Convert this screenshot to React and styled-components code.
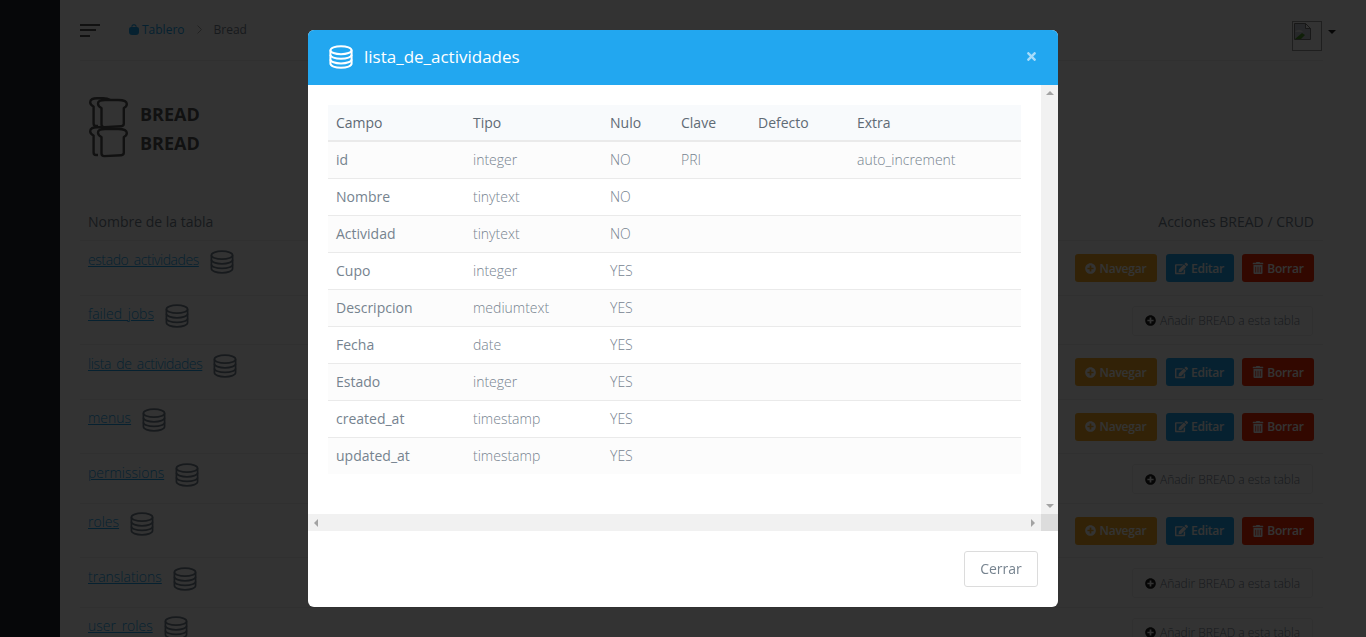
import React from "react";
import styled, { createGlobalStyle } from "styled-components";
import { FaPlusCircle, FaEdit, FaTrashAlt, FaTimes } from "react-icons/fa";

const GlobalStyle = createGlobalStyle`
  html, body {
    margin: 0;
    height: 100%;
    overflow: hidden;
    background: #fff;
    font-family: "Open Sans", "Liberation Sans", sans-serif;
    font-size: 14px;
    color: #76838f;
  }
  * { box-sizing: border-box; }
`;

const Page = styled.div`
  display: flex;
  height: 637px;
  overflow: hidden;
`;

const Sidebar = styled.aside`
  width: 60px;
  flex: none;
  background: #22262e;
`;

const Main = styled.main`
  flex: 1;
  padding: 0 43px 0 20px;
`;

const Navbar = styled.header`
  height: 61px;
  display: flex;
  align-items: center;
  border-bottom: 1px solid #eee;
`;

const Burger = styled.div`
  display: flex;
  flex-direction: column;
  gap: 3.5px;
  width: 20px;
  margin-right: 29px;
  span {
    display: block;
    height: 2px;
    background: #555;
  }
  span:nth-child(2) { width: 16px; }
  span:nth-child(3) { width: 10px; }
`;

const Crumbs = styled.nav`
  display: flex;
  align-items: center;
  font-size: 12px;
  color: #76838f;
  margin-top: -1px;
  a {
    display: flex;
    align-items: center;
    gap: 3px;
    color: #22a7f0;
  }
  svg.sep { margin: 0 12px; }
`;

const Profile = styled.div`
  align-self: flex-start;
  margin-left: auto;
  margin-right: -13px;
  padding-top: 21px;
  display: flex;
  align-items: flex-start;
  gap: 6px;
`;

const Avatar = styled.div`
  width: 30px;
  height: 30px;
  border: 1px solid #999;
  padding: 1px 0 0 1px;
`;

const Caret = styled.i`
  width: 0;
  height: 0;
  margin-top: 9px;
  border-left: 4px solid transparent;
  border-right: 4px solid transparent;
  border-top: 4px solid #222;
`;

const Heading = styled.div`
  display: flex;
  flex-direction: column;
  margin: 38px 0 0 9px;
`;

const HeadingLine = styled.div`
  display: flex;
  align-items: center;
  gap: 12px;
  height: 29px;
  font-size: 18px;
  font-weight: 700;
  color: #555;
  svg { margin-top: -2px; }
`;

const Table = styled.div`
  margin-top: 47px;
`;

const HeadRow = styled.div`
  display: flex;
  justify-content: space-between;
  align-items: flex-end;
  height: 37px;
  padding: 0 9px 9px 8px;
  border-bottom: 1px solid #eee;
  color: #76838f;
`;

const Row = styled.div`
  display: flex;
  justify-content: space-between;
  align-items: flex-start;
  height: ${(p) => (p.$bread ? 54.5 : 49.5)}px;
  padding: ${(p) => (p.$bread ? "13px 8px 0" : "10px 10px 0 8px")};
  border-bottom: 1px solid #eee;
`;

const TableName = styled.div`
  display: flex;
  align-items: flex-start;
  gap: 11px;
  margin-top: ${(p) => (p.$bread ? -5.5 : -2.5)}px;
  a {
    color: #22a7f0;
    font-weight: 300;
    letter-spacing: ${(p) => p.$track || 0}px;
    text-decoration: underline;
    line-height: 22px;
  }
  svg { margin-top: 1px; }
`;

const Actions = styled.div`
  display: flex;
  gap: 8.5px;
  margin-right: 1px;
`;

const ActionButton = styled.button`
  display: flex;
  align-items: center;
  justify-content: center;
  gap: 3px;
  height: 28px;
  width: ${(p) => p.$w}px;
  padding: 0;
  border: 0;
  border-radius: 3px;
  font: 600 12px "Open Sans", sans-serif;
  letter-spacing: -0.2px;
  color: #fff;
  background: ${(p) => p.$bg};
`;

const AddButton = styled.button`
  display: flex;
  align-items: center;
  justify-content: center;
  gap: 4px;
  width: 181px;
  height: 30px;
  padding: 0;
  background: #fff;
  border: 1px solid #eee;
  border-radius: 3px;
  font: 300 12px "Open Sans", sans-serif;
  color: #76838f;
  svg { color: #222; font-size: 11px; }
`;

const Backdrop = styled.div`
  position: fixed;
  inset: 0;
  background: rgba(0, 0, 0, 0.8);
  display: flex;
  justify-content: center;
  align-items: flex-start;
  padding-top: 30px;
`;

const Modal = styled.section`
  width: 750px;
  height: 577px;
  background: #fff;
  border-radius: 6px;
  overflow: hidden;
  display: flex;
  flex-direction: column;
`;

const ModalHeader = styled.div`
  height: 55px;
  flex: none;
  display: flex;
  align-items: center;
  gap: 11px;
  padding: 0 20px 2px 21px;
  background: #22a7f0;
  color: #fff;
  font-size: 17px;
`;

const Close = styled.span`
  margin-left: auto;
  display: flex;
  color: #a7dcfa;
`;

const ModalBody = styled.div`
  height: 446px;
  flex: none;
  display: grid;
  grid-template-columns: 733px 17px;
  grid-template-rows: 429px 17px;
`;

const Content = styled.div`
  padding: 20px;
  overflow: hidden;
`;

const ColumnsTable = styled.table`
  width: 693px;
  border-collapse: collapse;
  table-layout: fixed;
  th, td {
    height: 37px;
    padding: 0 8px;
    font-size: 14px;
    font-weight: 400;
    text-align: left;
    border-bottom: 1px solid #eaeaea;
  }
  th {
    height: 36px;
    color: #5f6a75;
    background: #f8fafc;
    border-bottom-width: 2px;
  }
  td { color: #76838f; font-weight: 300; }
  td:first-child { font-weight: 400; }
  tbody tr:nth-child(odd) { background: #fcfcfc; }
  tbody tr:last-child td { border-bottom: 0; }
`;

const Track = styled.div`
  display: flex;
  flex-direction: ${(p) => (p.$vertical ? "column" : "row")};
  justify-content: space-between;
  align-items: center;
  padding: ${(p) => (p.$vertical ? "6px 0" : "0 6px")};
  background: #f1f1f1;
`;

const Corner = styled.div`
  background: #dcdcdc;
`;

const Arrow = styled.i`
  width: 0;
  height: 0;
  ${(p) =>
    ({
      up: "border-left: 4px solid transparent; border-right: 4px solid transparent; border-bottom: 4px solid #a3a3a3;",
      down: "border-left: 4px solid transparent; border-right: 4px solid transparent; border-top: 4px solid #a3a3a3;",
      left: "border-top: 4px solid transparent; border-bottom: 4px solid transparent; border-right: 4px solid #a3a3a3;",
      right: "border-top: 4px solid transparent; border-bottom: 4px solid transparent; border-left: 4px solid #a3a3a3;",
    })[p.$dir]}
`;

const ModalFooter = styled.div`
  flex: 1;
  display: flex;
  justify-content: flex-end;
  padding: 20px;
`;

const CloseButton = styled.button`
  width: 74px;
  height: 36px;
  padding: 0 0 2px;
  background: #fff;
  border: 1px solid #dcdcdc;
  border-radius: 3px;
  font: 400 14px "Open Sans", sans-serif;
  color: #76838f;
`;

const DbIcon = ({ size = 24, color = "#76838f", width = 1.7 }) => (
  <svg width={size} height={size} viewBox="0 0 24 24" fill="none" stroke={color} strokeWidth={width}>
    <ellipse cx="12" cy="5.2" rx="10.6" ry="4" />
    <path d="M1.4 5.2v13.4c0 2.400 4.700 4.200 10.600 4.200s10.600-1.800 10.600-4.200V5.200" />
    <path d="M1.4 9.800c0 2.200 4.700 4 10.600 4s10.600-1.800 10.600-4" />
    <path d="M1.4 14.400c0 2.200 4.700 4 10.600 4s10.600-1.800 10.600-4" />
  </svg>
);

const BreadIcon = () => (
  <svg width="39" height="32" viewBox="0 0 39 32" fill="none" stroke="#555" strokeWidth="2.4" strokeLinejoin="round">
    <path d="M9 29H7c-1.500 0-2.400-1-2.400-2.600V9.500C2.600 8.600 1.200 7.200 1.200 5.200 1.200 2.400 4 1.200 8 1.200h6c3 0 5.400.6 7 1.800" />
    <path d="M12.500 27.500V11C10 10 9 8.300 9 6.500 9 4 12 3 16 3h13c5 0 8.800 1.300 8.800 4 0 1.800-1.300 3.200-3 4v15.800c0 1.500-1 2.300-2.500 2.400l-17 .9c-1.700 0-2.800-1-2.800-2.600z" />
  </svg>
);

const BoatIcon = () => (
  <svg width="10" height="11" viewBox="0 0 10 11" fill="#22a7f0">
    <path d="M2.500 3.500V2c0-2.400 5-2.400 5 0v1.500H6.600V2.200c0-1-3.200-1-3.200 0v1.300z" />
    <path d="M0 5c0-1.300 1-2 2-2h6c1 0 2 .7 2 2v3c0 2-1 3-3 3H3c-2 0-3-1-3-3z" />
  </svg>
);

const Chevron = () => (
  <svg className="sep" width="5" height="9" viewBox="0 0 5 9" fill="none" stroke="#aaa" strokeWidth="1">
    <path d="M.5.500l4 4-4 4" />
  </svg>
);

const BrokenImage = () => (
  <svg width="17" height="17" viewBox="0 0 17 17">
    <path d="M.5.500h11l5 5v11H.500z" fill="#c0c6d2" stroke="#777" />
    <path d="M11.500.500v5h5z" fill="#fff" stroke="#777" />
    <path d="M1 16l7-6 3 2-4 4z" fill="#4c9a2a" />
    <path d="M1 9c2-3 6-3 8 0z" fill="#e8e8e8" />
  </svg>
);

const tables = [
  ["estado_actividades", true, -0.42],
  ["failed_jobs", false],
  ["lista_de_actividades", true, -0.4],
  ["menus", true],
  ["permissions", false],
  ["roles", true],
  ["translations", false],
  ["user_roles", false],
];

const columns = [
  ["id", "integer", "NO", "PRI", "", "auto_increment"],
  ["Nombre", "tinytext", "NO", "", "", ""],
  ["Actividad", "tinytext", "NO", "", "", ""],
  ["Cupo", "integer", "YES", "", "", ""],
  ["Descripcion", "mediumtext", "YES", "", "", ""],
  ["Fecha", "date", "YES", "", "", ""],
  ["Estado", "integer", "YES", "", "", ""],
  ["created_at", "timestamp", "YES", "", "", ""],
  ["updated_at", "timestamp", "YES", "", "", ""],
];

const headers = ["Campo", "Tipo", "Nulo", "Clave", "Defecto", "Extra"];
const widths = [137, 137, 71, 77, 99, 172];

export default function App() {
  return (
    <>
      <GlobalStyle />
      <Page>
        <Sidebar />
        <Main>
          <Navbar>
            <Burger>
              <span />
              <span />
              <span />
            </Burger>
            <Crumbs>
              <a>
                <BoatIcon />
                Tablero
              </a>
              <Chevron />
              Bread
            </Crumbs>
            <Profile>
              <Avatar>
                <BrokenImage />
              </Avatar>
              <Caret />
            </Profile>
          </Navbar>
          <Heading>
            <HeadingLine>
              <BreadIcon />
              BREAD
            </HeadingLine>
            <HeadingLine>
              <BreadIcon />
              BREAD
            </HeadingLine>
          </Heading>
          <Table>
            <HeadRow>
              <span>Nombre de la tabla</span>
              <span>Acciones BREAD / CRUD</span>
            </HeadRow>
            {tables.map(([name, bread, track]) => (
              <Row key={name} $bread={bread}>
                <TableName $bread={bread} $track={track}>
                  <a>{name}</a>
                  <DbIcon />
                </TableName>
                {bread ? (
                  <Actions>
                    <ActionButton $w={82} $bg="#f9ac25">
                      <FaPlusCircle size={11} />
                      Navegar
                    </ActionButton>
                    <ActionButton $w={68} $bg="#22a7f0">
                      <FaEdit size={13} />
                      Editar
                    </ActionButton>
                    <ActionButton $w={72} $bg="#fa2a00">
                      <FaTrashAlt size={12} />
                      Borrar
                    </ActionButton>
                  </Actions>
                ) : (
                  <AddButton>
                    <FaPlusCircle />
                    Añadir BREAD a esta tabla
                  </AddButton>
                )}
              </Row>
            ))}
          </Table>
        </Main>
      </Page>
      <Backdrop>
        <Modal>
          <ModalHeader>
            <DbIcon color="#fff" width={2} />
            lista_de_actividades
            <Close>
              <FaTimes size={13} />
            </Close>
          </ModalHeader>
          <ModalBody>
            <Content>
              <ColumnsTable>
                <colgroup>
                  {widths.map((w, i) => (
                    <col key={i} style={{ width: w }} />
                  ))}
                </colgroup>
                <thead>
                  <tr>
                    {headers.map((h) => (
                      <th key={h}>{h}</th>
                    ))}
                  </tr>
                </thead>
                <tbody>
                  {columns.map((row) => (
                    <tr key={row[0]}>
                      {row.map((cell, i) => (
                        <td key={i}>{cell}</td>
                      ))}
                    </tr>
                  ))}
                </tbody>
              </ColumnsTable>
            </Content>
            <Track $vertical>
              <Arrow $dir="up" />
              <Arrow $dir="down" />
            </Track>
            <Track>
              <Arrow $dir="left" />
              <Arrow $dir="right" />
            </Track>
            <Corner />
          </ModalBody>
          <ModalFooter>
            <CloseButton>Cerrar</CloseButton>
          </ModalFooter>
        </Modal>
      </Backdrop>
    </>
  );
}
